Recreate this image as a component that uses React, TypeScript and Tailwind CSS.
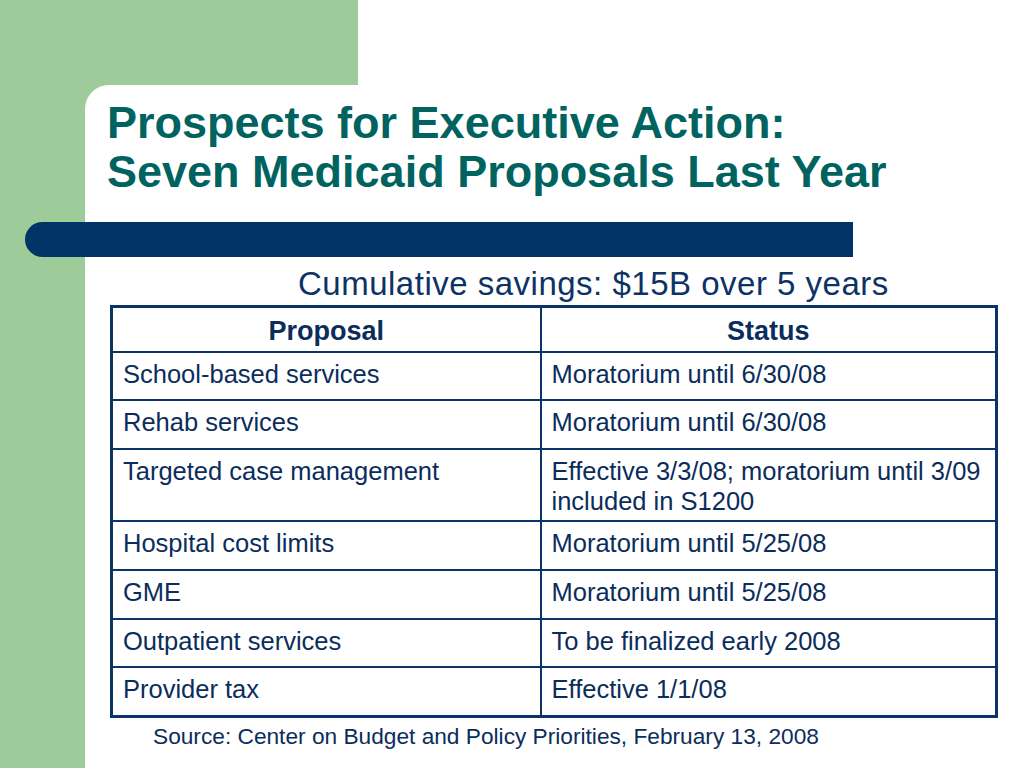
const rows: { proposal: string; status: string[]; tall?: boolean }[] = [
  { proposal: 'School-based services', status: ['Moratorium until 6/30/08'] },
  { proposal: 'Rehab services', status: ['Moratorium until 6/30/08'] },
  { proposal: 'Targeted case management', status: ['Effective 3/3/08; moratorium until 3/09', 'included in S1200'], tall: true },
  { proposal: 'Hospital cost limits', status: ['Moratorium until 5/25/08'] },
  { proposal: 'GME', status: ['Moratorium until 5/25/08'] },
  { proposal: 'Outpatient services', status: ['To be finalized early 2008'] },
  { proposal: 'Provider tax', status: ['Effective 1/1/08'] },
];

export default function App() {
  return (
    <div className="flex h-[768px] w-[1024px] flex-col overflow-hidden bg-white font-['Liberation_Sans',Arial,sans-serif] text-[#0b2d5c]">
      <div className="flex h-[85px] shrink-0">
        <div className="w-[358px] bg-[#9dcb99]" />
      </div>

      <div className="flex flex-1 bg-[#9dcb99]">
        <div className="w-[85px] shrink-0" />
        <div className="flex flex-1 flex-col rounded-tl-[24px] bg-white">
          <h1 className="pl-[22px] pt-[13px] text-[45px] font-bold leading-[49px] text-[#00635f]">
            Prospects for Executive Action:
            <br />
            Seven Medicaid Proposals Last Year
          </h1>

          <div className="-ml-[60px] mt-[26px] h-[35px] w-[828px] rounded-l-full bg-[#003366]" />

          <div className="mt-[8px] pl-[213px] text-[33px] leading-[37px] tracking-[0.5px] text-[#0d3364]">
            Cumulative savings: $15B over 5 years
          </div>

          <table className="ml-[25px] mt-[3px] w-[888px] border-collapse border-[3px] border-[#0b3466] text-[25.5px]">
            <thead>
              <tr className="h-[45px]">
                <th className="w-[429px] border-2 border-[#0b3466] pt-[8px] text-center align-top text-[27px] font-bold leading-[30px]">Proposal</th>
                <th className="border-2 border-[#0b3466] pt-[8px] text-center align-top text-[27px] font-bold leading-[30px]">Status</th>
              </tr>
            </thead>
            <tbody>
              {rows.map((r) => (
                <tr key={r.proposal} className={r.tall ? 'h-[72px]' : 'h-[48.75px]'}>
                  <td className="border-2 border-[#0b3466] pl-[10px] pt-[6px] align-top leading-[30px]">{r.proposal}</td>
                  <td className="border-2 border-[#0b3466] pl-[10px] pt-[6px] align-top leading-[30px]">
                    {r.status.map((s) => (
                      <div key={s}>{s}</div>
                    ))}
                  </td>
                </tr>
              ))}
            </tbody>
          </table>

          <div className="mt-[5px] pl-[68px] text-[22.7px] leading-[26px]">
            Source: Center on Budget and Policy Priorities, February 13, 2008
          </div>
        </div>
      </div>
    </div>
  );
}
